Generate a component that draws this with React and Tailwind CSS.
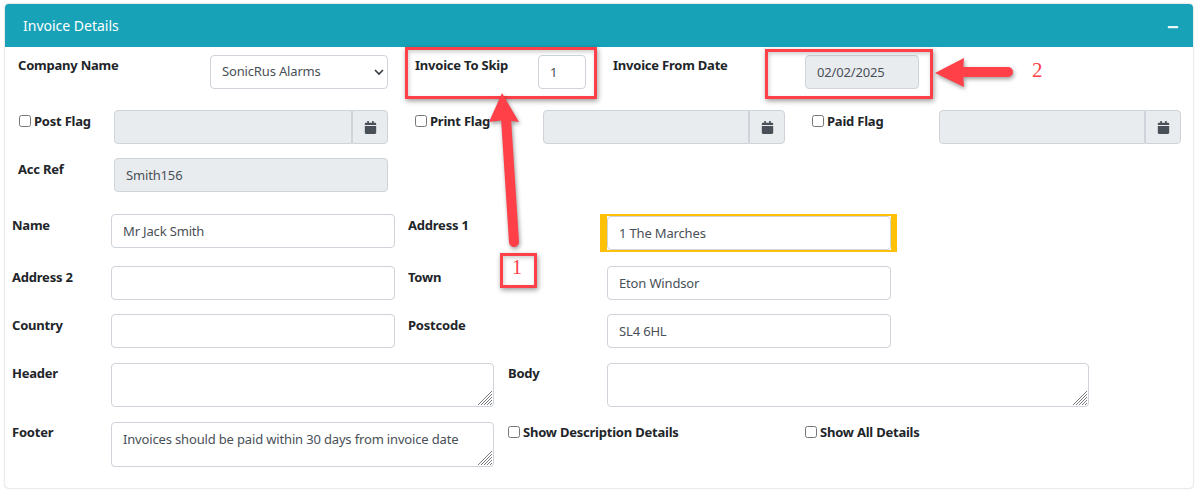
import { FaCalendar, FaMinus } from "react-icons/fa";

const inputCls =
  "h-[34px] rounded-[4px] border border-[#ced4da] px-[11px] text-[13px] text-[#495057] bg-white disabled:bg-[#e9ecef] outline-none";
const labelCls = "text-[13px] font-bold leading-5 tracking-[-0.22px] text-[#212529]";
const areaCls =
  "block w-full resize-none rounded-[4px] border border-[#ced4da] px-[11px] py-[6px] text-[13px] leading-5 text-[#495057] bg-white outline-none";

const Check = ({ label, className }) => (
  <label className={`flex items-center ${labelCls} ${className}`}>
    <input type="checkbox" className="m-0 mr-[3px] h-[12px] w-[12px]" />
    {label}
  </label>
);

const DateGroup = ({ className }) => (
  <div className={`flex ${className}`}>
    <input disabled className={`${inputCls} min-w-0 flex-1 rounded-r-none`} />
    <span className="flex h-[34px] w-[36px] items-center justify-center rounded-r-[4px] border border-[#ced4da] bg-[#e9ecef] text-[#495057]">
      <FaCalendar size={13} />
    </span>
  </div>
);

// textarea with the hatched corner grip the browser draws in the screenshot
const Area = ({ className, defaultValue }) => (
  <div className={`relative ${className}`}>
    <textarea className={`${areaCls} h-full`} defaultValue={defaultValue} />
    <svg className="absolute bottom-[2px] right-[2px]" width="14" height="14" stroke="#7a7a7a" strokeWidth="1">
      <path d="M0 14 L14 0 M3 14 L14 3 M6 14 L14 6 M9 14 L14 9 M12 14 L14 12" />
    </svg>
  </div>
);

const RedBox = ({ className }) => (
  <div className={`absolute border-[3px] border-[#ff4049] shadow-[1px_2px_5px_rgba(0,0,0,0.4),inset_1px_2px_4px_rgba(0,0,0,0.2)] ${className}`} />
);

const App = () => {
  return (
    <div className="relative h-[495px] w-[1197px] overflow-hidden bg-white font-['Noto_Sans',sans-serif] tracking-[-0.16px]">
      <section className="absolute left-[5px] top-[4px] h-[484px] w-[1188px] rounded-[4px] bg-white shadow-[0_0_2px_rgba(0,0,0,0.3)]">
        <header className="flex h-[43px] items-center justify-between rounded-t-[4px] bg-[#17a2b8] pl-[18px] pr-[14px] text-white">
          <h3 className="text-[14px] font-normal tracking-normal">Invoice Details</h3>
          <FaMinus size={12} className="mt-[3px] text-[#e8f6f8]" />
        </header>

        <div className="flex flex-col">
          <div className="mt-[8px] flex pl-[13px]">
            <span className={`${labelCls} w-[192px]`}>Company Name</span>
            <div className="relative w-[178px]">
              <select className={`${inputCls} w-full appearance-none`} defaultValue="SonicRus Alarms">
                <option>SonicRus Alarms</option>
              </select>
              <svg className="absolute right-[4px] top-[14px]" width="10" height="7" viewBox="0 0 10 7" fill="none" stroke="#343a40" strokeWidth="1.6">
                <path d="M1 1 L5 5 L9 1" />
              </svg>
            </div>
            <span className={`${labelCls} ml-[27px] w-[123px]`}>Invoice To Skip</span>
            <input className={`${inputCls} w-[48px]`} defaultValue="1" />
            <span className={`${labelCls} ml-[27px] w-[192px]`}>Invoice From Date</span>
            <input disabled className={`${inputCls} w-[114px]`} defaultValue="02/02/2025" />
          </div>

          <div className="mt-[21px] flex pl-[14px]">
            <Check label="Post Flag" className="h-[22px] w-[95px]" />
            <DateGroup className="w-[274px]" />
            <Check label="Print Flag" className="ml-[27px] h-[22px] w-[128px]" />
            <DateGroup className="w-[242px]" />
            <Check label="Paid Flag" className="ml-[27px] h-[22px] w-[127px]" />
            <DateGroup className="w-[242px]" />
          </div>

          <div className="mt-[14px] flex pl-[13px]">
            <span className={`${labelCls} w-[96px] pt-[1px]`}>Acc Ref</span>
            <input disabled className={`${inputCls} w-[274px]`} defaultValue="Smith156" />
          </div>

          <div className="mt-[22px] flex pl-[7px]">
            <span className={`${labelCls} w-[99px] pt-[1px]`}>Name</span>
            <input className={`${inputCls} w-[284px]`} defaultValue="Mr Jack Smith" />
            <span className={`${labelCls} ml-[13px] w-[192px] pt-[1px]`}>Address 1</span>
            <div className="h-[38px] w-[297px] border-y-[2px] border-l-[7px] border-r-[6px] border-[#ffc107]">
              <input className={`${inputCls} w-full`} defaultValue="1 The Marches" />
            </div>
          </div>

          <div className="mt-[14px] flex pl-[7px]">
            <span className={`${labelCls} w-[99px] pt-[1px]`}>Address 2</span>
            <input className={`${inputCls} w-[284px]`} />
            <span className={`${labelCls} ml-[13px] w-[199px] pt-[1px]`}>Town</span>
            <input className={`${inputCls} w-[284px]`} defaultValue="Eton Windsor" />
          </div>

          <div className="mt-[14px] flex pl-[7px]">
            <span className={`${labelCls} w-[99px] pt-[1px]`}>Country</span>
            <input className={`${inputCls} w-[284px]`} />
            <span className={`${labelCls} ml-[13px] w-[199px] pt-[1px]`}>Postcode</span>
            <input className={`${inputCls} w-[284px]`} defaultValue="SL4 6HL" />
          </div>

          <div className="mt-[15px] flex pl-[7px]">
            <span className={`${labelCls} w-[99px]`}>Header</span>
            <Area className="h-[44px] w-[383px]" />
            <span className={`${labelCls} ml-[14px] w-[99px]`}>Body</span>
            <Area className="h-[44px] w-[482px]" />
          </div>

          <div className="mt-[15px] flex pl-[7px]">
            <span className={`${labelCls} w-[99px]`}>Footer</span>
            <Area className="h-[45px] w-[383px]" defaultValue="Invoices should be paid within 30 days from invoice date" />
            <Check label="Show Description Details" className="ml-[14px] h-[19px] w-[297px]" />
            <Check label="Show All Details" className="h-[19px]" />
          </div>
        </div>
      </section>

      <RedBox className="left-[405px] top-[47px] h-[52px] w-[192px]" />
      <RedBox className="left-[765px] top-[49px] h-[50px] w-[168px]" />
      <RedBox className="left-[500px] top-[253px] h-[35px] w-[37px]" />

      <svg className="absolute left-0 top-0 drop-shadow-[1px_2px_2px_rgba(0,0,0,0.4)]" width="1197" height="495" fill="none">
        <path d="M514 242 L506 118" stroke="#ff4049" strokeWidth="10" strokeLinecap="round" />
        <path d="M502 93 L519 122 L505 120 L489 122 Z" fill="#ff4049" />
        <path d="M960 72 L1008 72" stroke="#ff4049" strokeWidth="10" strokeLinecap="round" />
        <path d="M935 73 L964 58 L963 72 L964 87 Z" fill="#ff4049" />
      </svg>

      <span className="absolute left-[512px] top-[257px] font-['Liberation_Serif',serif] text-[20px] leading-5 text-[#ff4049]">1</span>
      <span className="absolute left-[1032px] top-[60px] font-['Liberation_Serif',serif] text-[21px] leading-5 text-[#ff4049]">2</span>
    </div>
  );
};

export default App;
